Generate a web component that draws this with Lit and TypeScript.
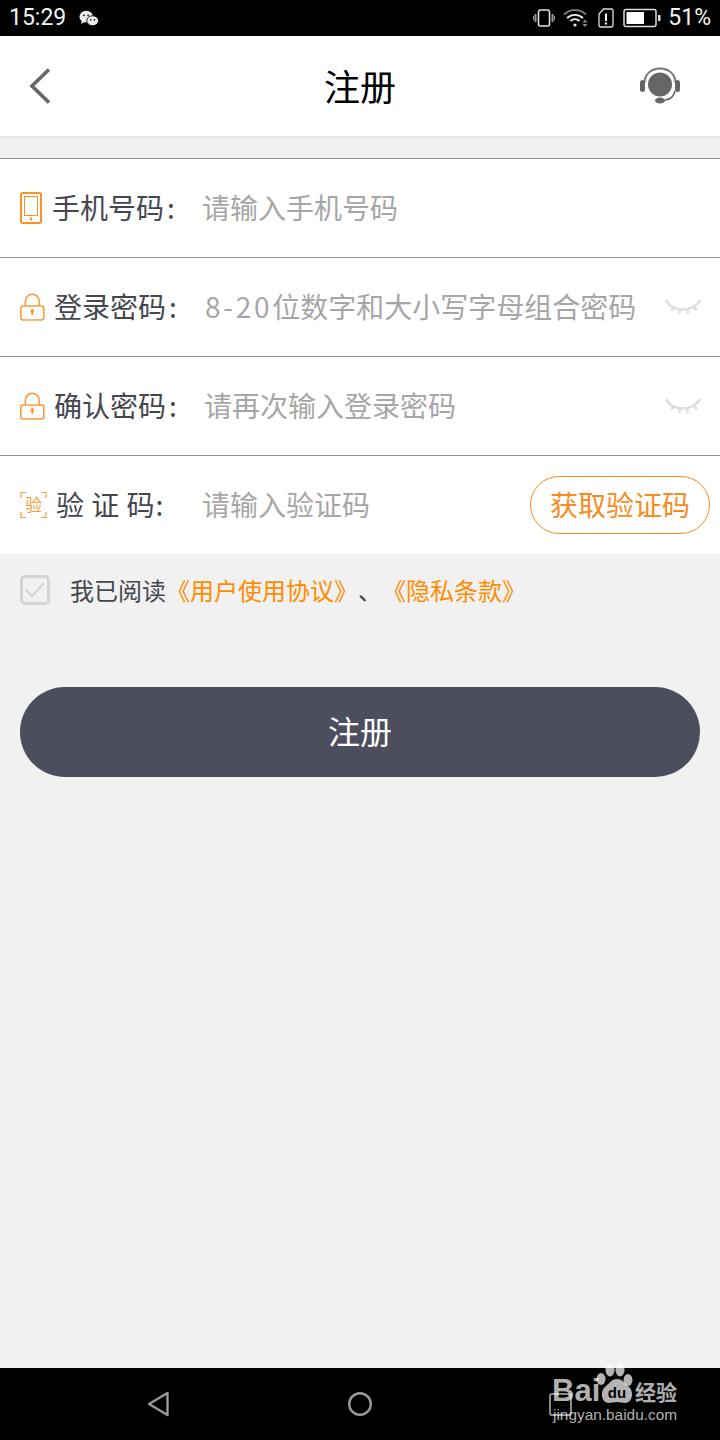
import { LitElement, html, css, svg } from 'lit';
import { customElement } from 'lit/decorators.js';

const lock = svg`<svg class="ic" width="26" height="28" viewBox="0 0 26 28" fill="none" stroke="#fb9a3c" stroke-width="1.600">
  <rect x=".8" y="13" width="23" height="14" rx="2.500"/>
  <path d="M5.300 13V8.300a7 7 0 0 1 14 0V13"/>
  <circle cx="12.300" cy="18" r="1.900" fill="#fb9a3c" stroke="none"/>
  <path d="M12.300 18.500v3.400" stroke-width="1.800"/>
</svg>`;

const eye = svg`<svg class="eye" width="36" height="18" viewBox="0 0 36 18" fill="none" stroke="#dedede" stroke-width="2.400">
  <path d="M1 3c5 7 11 8.500 17 8.500S30 10 35 2.500" stroke-width="2.600"/>
  <path d="M3 4.500 1 2M8.500 9 6.500 13M15 11l-.800 5M22 11l.800 5M29 8.500l2.500 4M33.500 4.500 35 2"/>
</svg>`;

@customElement('app-root')
export class AppRoot extends LitElement {
  static styles = css`
    :host {
      display: block;
      width: 720px;
      height: 1440px;
      background: #f1f1f1;
      font-family: 'Noto Sans CJK SC', 'Noto Sans', sans-serif;
      position: relative;
      overflow: hidden;
    }
    .page {
      height: 1440px;
      display: flex;
      flex-direction: column;
    }
    .status {
      height: 36px;
      flex: none;
      background: #000;
      color: #f2f2f2;
      display: flex;
      align-items: center;
      padding: 0 9px;
      font: 23px/36px Roboto, sans-serif;
    }
    .status .time {
      margin-right: 13px;
    }
    .status .right {
      margin-left: auto;
      display: flex;
      align-items: center;
    }
    .status svg {
      display: block;
    }
    .status .pct {
      margin-left: 7px;
    }
    .header {
      height: 100px;
      flex: none;
      background: #fff;
      border-bottom: 2px solid #e6e6e6;
      display: flex;
      align-items: center;
      justify-content: space-between;
      padding: 0 40px 0 29px;
    }
    .title {
      font-size: 36px;
      line-height: 48px;
      color: #000;
      position: absolute;
      left: 0;
      right: 0;
      text-align: center;
      top: 61px;
    }
    .form {
      margin-top: 20px;
      background: #fff;
      flex: none;
    }
    .row {
      height: 98px;
      border-top: 1px solid #959595;
      display: flex;
      align-items: center;
      padding-left: 20px;
      position: relative;
      font-size: 28px;
    }
    .ic {
      flex: none;
      display: block;
    }
    .label {
      color: #45474f;
      white-space: pre;
      margin-bottom: 2px;
    }
    .colon {
      margin-left: 3px;
    }
    .wide {
      word-spacing: 1px;
    }
    .wide .colon {
      margin-left: 1px;
    }
    .ph {
      color: #a6a6a6;
      white-space: pre;
      margin-bottom: 2px;
    }
    .num {
      letter-spacing: 2.750px;
    }
    .eye {
      position: absolute;
      right: 19px;
      top: 40px;
    }
    .code-btn {
      position: absolute;
      left: 530px;
      top: 20px;
      width: 180px;
      height: 58px;
      box-sizing: border-box;
      border: 1px solid #f78c1e;
      border-radius: 29px;
      color: #f78c1e;
      font-size: 28px;
      line-height: 54px;
      text-align: center;
    }
    .agree {
      height: 72px;
      display: flex;
      align-items: center;
      padding-left: 20px;
      font-size: 24px;
      color: #45474f;
      flex: none;
    }
    .agree span:not(.check) {
      margin-bottom: 2px;
    }
    .check {
      width: 30px;
      height: 30px;
      box-sizing: border-box;
      border: 3px solid #d4d4d4;
      border-radius: 5px;
      margin-right: 20px;
      flex: none;
    }
    .check svg {
      display: block;
    }
    .link {
      color: #ff8c00;
    }
    .submit {
      margin: 61px 20px 0;
      height: 90px;
      border-radius: 45px;
      background: #4c4d5d;
      color: #fff;
      font-size: 32px;
      line-height: 86px;
      text-align: center;
      flex: none;
    }
    .nav {
      margin-top: auto;
      height: 72px;
      flex: none;
      background: #000;
      position: relative;
    }
    .nav svg {
      position: absolute;
    }
    .mark {
      position: absolute;
      left: 552px;
      top: 1362px;
      width: 140px;
      height: 70px;
      color: rgba(255, 255, 255, 0.7);
      font-family: 'Liberation Sans', sans-serif;
    }
    .mark svg {
      position: absolute;
      left: 0;
      top: 0;
    }
    .mark .bai {
      position: absolute;
      left: 0;
      top: 12px;
      font: bold 31px/34px 'Liberation Sans', sans-serif;
    }
    .mark .du {
      position: absolute;
      left: 54px;
      top: 22px;
      width: 22px;
      text-align: center;
      color: #000;
      font: bold 15px/18px 'Liberation Sans', sans-serif;
    }
    .mark .jy {
      position: absolute;
      left: 83px;
      top: 16px;
      font: bold 21px/26px 'Noto Sans CJK SC', sans-serif;
      white-space: nowrap;
    }
    .mark .url {
      position: absolute;
      left: 1px;
      top: 42px;
      font: 15.400px/22px 'Liberation Sans', sans-serif;
      white-space: nowrap;
    }
  `;

  render() {
    return html`
      <div class="page">
        <div class="status">
          <span class="time">15:29</span>
          <svg width="20" height="17" viewBox="0 0 22 18" fill="#ececec">
            <ellipse cx="8" cy="7" rx="7.500" ry="6.500"/>
            <path d="M3 11l-.500 4 4-2.500z"/>
            <ellipse cx="15" cy="11.500" rx="6.500" ry="5.500" stroke="#000" stroke-width="1"/>
            <circle cx="5.500" cy="5.500" r="1" fill="#000"/>
            <circle cx="10" cy="5.500" r="1" fill="#000"/>
            <circle cx="13" cy="10.500" r=".9" fill="#000"/>
            <circle cx="17" cy="10.500" r=".9" fill="#000"/>
          </svg>
          <div class="right">
            <svg width="22" height="18" viewBox="0 0 22 18" fill="none" stroke="#e8e8e8">
              <rect x="5.500" y="1" width="11" height="16" rx="2" stroke-width="1.500"/>
              <path d="M2.500 5v8M19.500 5v8" stroke-width="2" stroke="#999"/>
              <path d="M.5 7v4M21.500 7v4" stroke-width="1" stroke="#999"/>
            </svg>
            <svg style="margin-left:8px" width="26" height="20" viewBox="0 0 26 20" fill="none" stroke="#eee" stroke-width="1.800">
              <path d="M1 6.500c6.500-6 15.500-6 22 0" stroke="#777"/>
              <path d="M4 10c4.800-4.300 11.200-4.300 16 0"/>
              <path d="M7.500 13c2.800-2.300 6.200-2.300 9 0"/>
              <circle cx="12" cy="17" r="1.600" fill="#eee" stroke="none"/>
              <path d="M19.500 14.500h5l-2.500-3zM19.500 16h5l-2.500 3z" fill="#888" stroke="none"/>
            </svg>
            <svg style="margin-left:9px" width="16" height="20" viewBox="0 0 16 20" fill="none" stroke="#ddd" stroke-width="1.300">
              <path d="M5.500 1H13.500a1.500 1.500 0 0 1 1.500 1.500V17.500a1.500 1.500 0 0 1-1.500 1.500H2.500A1.500 1.500 0 0 1 1 17.500V6z"/>
              <path d="M8 5.500v7.500M8 14.500v2" stroke="#fff" stroke-width="2"/>
            </svg>
            <svg style="margin-left:9px" width="38" height="20" viewBox="0 0 38 20" fill="none">
              <rect x="1" y="1.500" width="32" height="17" rx="2" stroke="#ddd" stroke-width="1.500"/>
              <rect x="3.500" y="4" width="17.500" height="12" fill="#fff"/>
              <rect x="35" y="7" width="2.500" height="6" fill="#ddd"/>
            </svg>
            <span class="pct">51%</span>
          </div>
        </div>

        <div class="header">
          <svg width="22" height="36" viewBox="0 0 22 36" fill="none" stroke="#666" stroke-width="3.600">
            <path d="M20 1.500 3 18l17 16.500"/>
          </svg>
          <span class="title">注册</span>
          <svg width="40" height="38" viewBox="0 0 40 38" fill="#666">
            <path d="M4.500 16C4.500 7 11.500 1.500 20 1.500S35.500 7 35.500 16" fill="none" stroke="#777" stroke-width="2"/>
            <circle cx="20" cy="17.500" r="12"/>
            <rect x="0" y="13" width="5" height="12" rx="2.500"/>
            <rect x="35" y="13" width="5" height="12" rx="2.500"/>
            <path d="M35 24c-1 5-5 8.500-10 9" fill="none" stroke="#666" stroke-width="1.500"/>
            <ellipse cx="20" cy="33.500" rx="5" ry="3"/>
          </svg>
        </div>

        <div class="form">
          <div class="row">
            <svg class="ic" width="22" height="32" viewBox="0 0 22 32" fill="none" stroke="#fb9227">
              <rect x="1" y="1" width="20" height="30" rx="2" stroke-width="2"/>
              <rect x="4.500" y="4.500" width="13" height="19" stroke-width="1"/>
              <circle cx="11" cy="27" r="1.400" fill="#fb9227" stroke="none"/>
            </svg>
            <span class="label" style="margin-left:10px;width:150px">手机号码<span class="colon">:</span></span>
            <span class="ph">请输入手机号码</span>
          </div>
          <div class="row">
            ${lock}
            <span class="label" style="margin-left:8px;width:151px">登录密码<span class="colon">:</span></span>
            <span class="ph"><span class="num">8-20</span>位数字和大小写字母组合密码</span>
            ${eye}
          </div>
          <div class="row">
            ${lock}
            <span class="label" style="margin-left:8px;width:150px">确认密码<span class="colon">:</span></span>
            <span class="ph">请再次输入登录密码</span>
            ${eye}
          </div>
          <div class="row">
            <svg class="ic" width="27" height="28" viewBox="0 0 27 28" fill="none" stroke="#fb9a3c" stroke-width="1.200">
              <path d="M1 7V1.500h5M21 1.500h5V7M1 21v5.500h5M21 26.500h5V21"/>
              <text x="13.500" y="20" text-anchor="middle" font-size="17" fill="#fb9a3c" stroke="none">验</text>
            </svg>
            <span class="label wide" style="margin-left:9px;width:146px">验 证 码<span class="colon">:</span></span>
            <span class="ph">请输入验证码</span>
            <span class="code-btn">获取验证码</span>
          </div>
        </div>

        <div class="agree">
          <span class="check">
            <svg width="24" height="24" viewBox="0 0 24 24" fill="none" stroke="#d4d4d4" stroke-width="2.200">
              <path d="M3 12l6 6L21 5"/>
            </svg>
          </span>
          <span>我已阅读</span><span class="link">《用户使用协议》</span><span>、</span><span class="link">《隐私条款》</span>
        </div>

        <div class="submit">注册</div>

        <div class="nav">
          <svg style="left:147px;top:23px" width="22" height="26" viewBox="0 0 22 26" fill="none" stroke="#9a9a9a" stroke-width="2.400" stroke-linejoin="round">
            <path d="M20.500 2v22L2 13z"/>
          </svg>
          <svg style="left:347px;top:23px" width="26" height="26" viewBox="0 0 26 26" fill="none" stroke="#9a9a9a" stroke-width="2.400">
            <circle cx="13" cy="13" r="10.800"/>
          </svg>
          <svg style="left:549px;top:25px" width="23" height="23" viewBox="0 0 23 23" fill="none" stroke="#8a8a8a" stroke-width="2">
            <rect x="1" y="1" width="21" height="21" rx="2"/>
          </svg>
        </div>
      </div>

      <div class="mark">
        <svg width="140" height="50" viewBox="0 0 140 50" fill="#fff" fill-opacity=".7">
          <ellipse cx="49" cy="17" rx="4.500" ry="6"/>
          <ellipse cx="58" cy="8" rx="4.500" ry="6.500"/>
          <ellipse cx="68" cy="8" rx="4.500" ry="6.500"/>
          <ellipse cx="76" cy="18" rx="4.500" ry="6"/>
          <path d="M65 17c6 0 8 5 12 8 5 4 4 16-4 16-3 0-5-1-8-1s-5 1-8 1c-8 0-9-12-4-16 4-3 6-8 12-8z"/>
        </svg>
        <span class="bai">Bai</span>
        <span class="du">du</span>
        <span class="jy">经验</span>
        <span class="url">jingyan.baidu.com</span>
      </div>
    `;
  }
}
